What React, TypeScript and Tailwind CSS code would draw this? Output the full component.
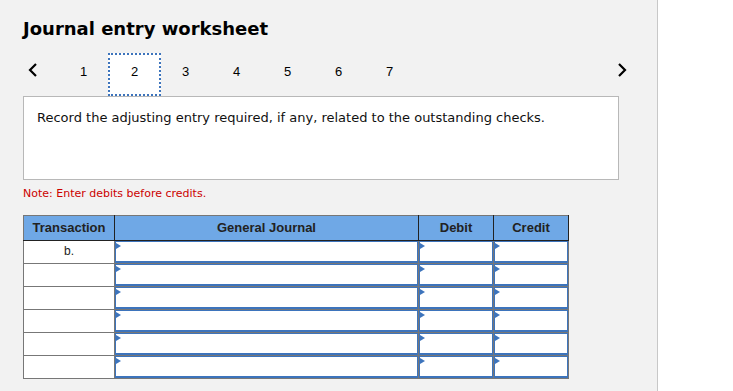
const pages = [1, 2, 3, 4, 5, 6, 7];
const rows = ["b.", "", "", "", "", ""];

function Flag() {
  return (
    <span className="absolute left-0 top-[1px] h-0 w-0 border-y-[3px] border-l-[5px] border-y-transparent border-l-[#3d74bc]" />
  );
}

function InputCell() {
  return (
    <td className="h-[23px] border border-[#777] p-0">
      <div className="relative h-[22px] border border-b-2 border-[#3d74bc] bg-white">
        <Flag />
      </div>
    </td>
  );
}

function Chevron({ dir }: { dir: "left" | "right" }) {
  return (
    <svg width="12" height="16" viewBox="0 0 12 16" fill="none">
      <polyline
        points={dir === "left" ? "9,2 3,8 9,14" : "3,2 9,8 3,14"}
        stroke="#000"
        strokeWidth="2.2"
      />
    </svg>
  );
}

export default function App() {
  return (
    <div className="flex h-[391px] w-[733px] bg-white">
      <div className="h-full w-[658px] border-r border-[#c8c8c8] bg-[#f2f2f2] pl-[23px] pt-[19px]">
        <h1 className="text-[18px] font-bold leading-[20px] text-black [font-family:'DejaVu_Sans',sans-serif]">
          Journal entry worksheet
        </h1>

        {/* step navigation */}
        <div className="mt-[14px] flex h-[43px] w-[605px] items-start justify-between">
          <div className="flex items-start">
            <div className="flex w-[35px] pl-[4px] pt-[9px]">
              <Chevron dir="left" />
            </div>
            {pages.map((p) => (
              <div
                key={p}
                className={
                  p === 2
                    ? "-mx-px flex h-[43px] w-[53px] justify-center border-2 border-dotted border-[#3d74bc] bg-white pt-[9px] text-[13px] leading-[15px] text-black [font-family:'Liberation_Sans',sans-serif]"
                    : "flex h-[43px] w-[51px] justify-center pt-[11px] text-[13px] leading-[15px] text-black [font-family:'Liberation_Sans',sans-serif]"
                }
              >
                {p}
              </div>
            ))}
          </div>
          <div className="pt-[9px]">
            <Chevron dir="right" />
          </div>
        </div>

        <div className="h-[84px] w-[596px] border border-[#b8b8b8] bg-white px-[13px] pt-[13px]">
          <p className="text-[13px] leading-[16px] text-[#111] [font-family:'DejaVu_Sans',sans-serif]">
            Record the adjusting entry required, if any, related to the outstanding checks.
          </p>
        </div>

        <p className="mt-[7px] text-[11px] leading-[14px] text-[#c00] [font-family:'DejaVu_Sans',sans-serif]">
          Note: Enter debits before credits.
        </p>

        <table className="mt-[14px] border-collapse border border-[#777] [font-family:'Liberation_Sans',sans-serif]">
          <thead>
            <tr className="h-[25px] bg-[#6fa8e6] text-[13px] font-bold text-[#222]">
              <th className="w-[91px] border border-[#222] border-l-[#777] border-t-[#777] p-0">Transaction</th>
              <th className="w-[304px] border border-[#222] border-t-[#777] p-0">General Journal</th>
              <th className="w-[75px] border border-[#222] border-t-[#777] p-0">Debit</th>
              <th className="w-[75px] border border-[#222] border-t-[#777] p-0">Credit</th>
            </tr>
          </thead>
          <tbody>
            {rows.map((r, i) => (
              <tr key={i}>
                <td className="h-[23px] border border-[#777] bg-white p-0 text-center align-top text-[12px] leading-[20px] text-[#222]">
                  {r}
                </td>
                <InputCell />
                <InputCell />
                <InputCell />
              </tr>
            ))}
          </tbody>
        </table>
      </div>
    </div>
  );
}
